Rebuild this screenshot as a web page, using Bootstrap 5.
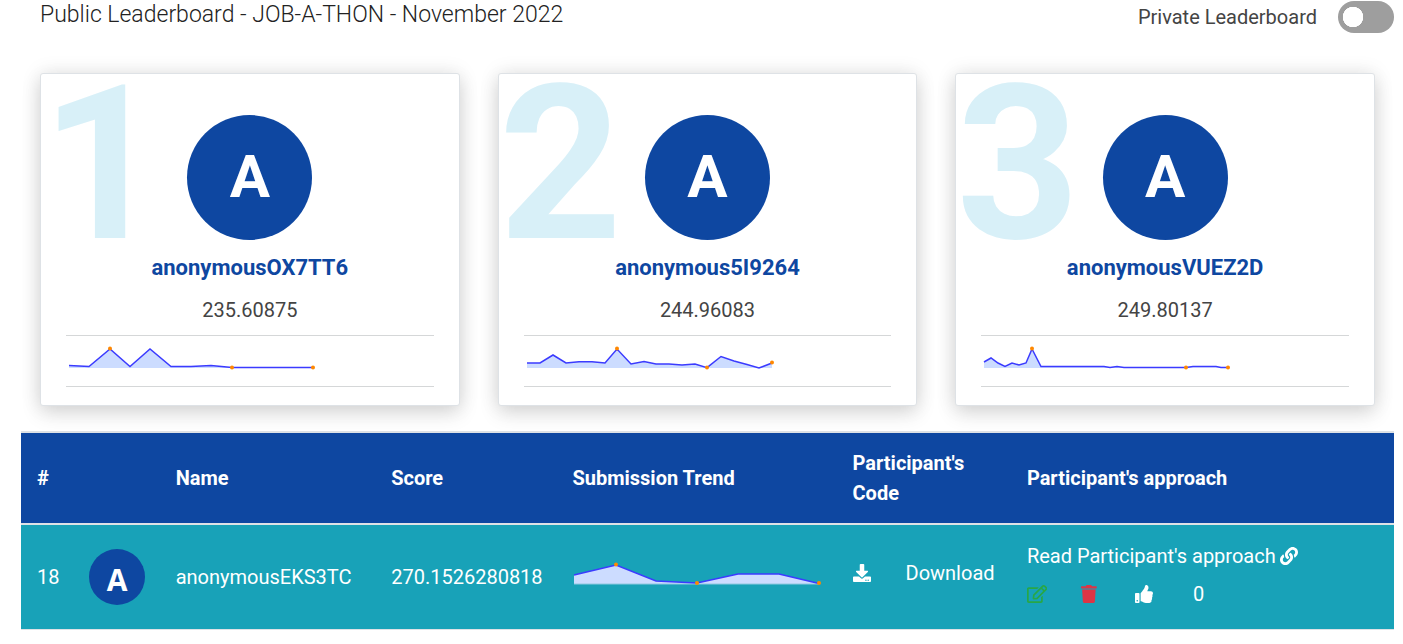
<!DOCTYPE html>
<html lang="en">
<head>
<meta charset="utf-8">
<meta name="viewport" content="width=device-width, initial-scale=1">
<title>Public Leaderboard</title>
<link href="https://cdn.jsdelivr.net/npm/bootstrap@5.3.0/dist/css/bootstrap.min.css" rel="stylesheet">
<style>
  body { font-family: Roboto, "Liberation Sans", sans-serif; font-size: 20px; line-height: 30px; color: #444; }
  .page { padding: 1px 9px 0 21px; }
  .page-head { padding-left: 19px; min-height: 72px; }
  .page-title { font-size: 23px; line-height: 28px; font-weight: 300; color: #222; }
  .switch-label { margin-right: 21px; }
  .form-check-input.private-switch {
    width: 56px; height: 32px; margin: 0; border: 0; border-radius: 16px; background-color: #9e9e9e;
    background-image: radial-gradient(circle at center, #fff 10px, transparent 10.5px);
    background-size: 30px 32px; background-position: left center; background-repeat: no-repeat;
  }
  .form-check-input.private-switch:checked { background-color: #0e47a1; background-position: right center; }
  .podium { --bs-gutter-x: 38px; margin-bottom: 25px; }
  .rank-card { border-radius: 3px; border-color: #dee2e6; padding: 41px 25px 18px; box-shadow: 0 0 20px rgba(0,0,0,.1), 0 8px 20px rgba(0,0,0,.12); }
  .rank-number { position: absolute; left: 0; top: 0; font-size: 215px; line-height: 182px; font-weight: 700; color: #d8f0f8; }
  .avatar { width: 56px; height: 56px; padding-top: 6px; border-radius: 50%; background: #0e47a1; color: #fff; font: 700 30px/1 "Open Sans", sans-serif; }
  .avatar-lg { width: 125px; height: 125px; padding: 0 0 2px; font: 700 60px/1 Roboto, sans-serif; position: relative; }
  .rank-name { font-size: 22px; line-height: 30px; font-weight: 700; color: #0e47a1; margin: 13px 0 12px; text-decoration: none; }
  .rank-score { line-height: 30px; margin-bottom: 10px; }
  .rank-trend { border-top: 1px solid #d5d7d8; border-bottom: 1px solid #d5d7d8; height: 52px; padding-top: 7px; }
  .spark { display: block; width: 252px; height: 30px; }
  .spark polygon { fill: #ccdcff; }
  .spark polyline { fill: none; stroke: #3b3bff; stroke-width: 1.5; }
  .spark circle { fill: #f80; }
  .table.board { table-layout: fixed; min-width: 1100px; margin: 0; border-top: 2px solid #dee2e6; border-bottom: 1px solid #dee2e6; }
  .table.board th, .table.board td { padding: 15px 16px; color: #fff; vertical-align: middle; border: 0; }
  .table.board th { background: #0e47a1; font-weight: 700; }
  .table.board td { background: #18a2b8; height: 105px; border-top: 2px solid #dee2e6; }
  .c-rank { width: 3.8%; } .c-pic { width: 6.3%; } .c-name { width: 15.7%; } .c-score { width: 13.2%; }
  .c-trend { width: 20.4%; } .c-code { width: 12.7%; }
  .board a, .board button { color: #fff; text-decoration: none; }
  .glyph { display: block; height: 18px; fill: currentColor; }
  .icon-btn { width: 54px; border: 0; padding: 0; background: none; }
  .download { gap: 35px; }
</style>
</head>
<body>
<div class="page">
  <header class="page-head d-flex justify-content-between align-items-start">
    <h1 class="page-title mb-0">Public Leaderboard - JOB-A-THON - November 2022</h1>
    <div class="d-flex align-items-center">
      <label for="private" class="switch-label">Private Leaderboard</label>
      <input class="form-check-input private-switch" type="checkbox" role="switch" id="private">
    </div>
  </header>

  <main>
    <div class="row podium mx-0">
      <div class="col-4">
        <div class="card rank-card">
          <span class="rank-number">1</span>
          <div class="avatar avatar-lg d-flex align-items-center justify-content-center mx-auto">A</div>
          <a href="#" class="rank-name d-block text-center">anonymousOX7TT6</a>
          <p class="rank-score text-center">235.60875</p>
          <div class="rank-trend">
            <svg class="spark" viewBox="0 0 252 30"><polygon points="3,25 3,22 23,23.5 44,6 64,23.5 84,6 105,23.5 125,23.5 145,22.5 166,24.5 247,24.5 247,25"/><polyline points="3,22.5 23,23.5 44,6 64,23.5 84,6 105,23.5 125,23.5 145,22.5 166,24.5 247,24.5"/><circle cx="44" cy="5.5" r="2"/><circle cx="166" cy="24.5" r="2"/><circle cx="247" cy="24.5" r="2"/></svg>
          </div>
        </div>
      </div>
      <div class="col-4">
        <div class="card rank-card">
          <span class="rank-number">2</span>
          <div class="avatar avatar-lg d-flex align-items-center justify-content-center mx-auto">A</div>
          <a href="#" class="rank-name d-block text-center">anonymous5I9264</a>
          <p class="rank-score text-center">244.96083</p>
          <div class="rank-trend">
            <svg class="spark" viewBox="0 0 252 30"><polygon points="3,25 3,20 16,20 29,12 42,20 55,18.7 68,18.7 81,20 93,6 107,21 120,18.5 132,21 145,21 158,22 171,21 183,24.7 197,13.5 210,18 223,21.5 235,25 248,20 248,25"/><polyline points="3,20 16,20 29,12 42,20 55,18.7 68,18.7 81,20 93,6 107,21 120,18.5 132,21 145,21 158,22 171,21 183,24.7 197,13.5 210,18 223,21.5 235,25 248,20"/><circle cx="93" cy="5.5" r="2"/><circle cx="183" cy="24.5" r="2"/><circle cx="248" cy="19.5" r="2"/></svg>
          </div>
        </div>
      </div>
      <div class="col-4">
        <div class="card rank-card">
          <span class="rank-number">3</span>
          <div class="avatar avatar-lg d-flex align-items-center justify-content-center mx-auto">A</div>
          <a href="#" class="rank-name d-block text-center">anonymousVUEZ2D</a>
          <p class="rank-score text-center">249.80137</p>
          <div class="rank-trend">
            <svg class="spark" viewBox="0 0 252 30"><polygon points="3,25 3,19 10,15 17,20 24,23.5 31,20 38,22 45,20 51,6 60,23.5 123,23.5 129,24.5 136,23.5 143,24.5 247,24.5 247,25"/><polyline points="3,19 10,15 17,20 24,23.5 31,20 38,22 45,20 51,6 60,23.5 123,23.5 129,24.5 136,23.5 143,24.5 205,24.5 212,23.5 235,23.5 240,24.5 247,24.5"/><circle cx="51" cy="5.5" r="2"/><circle cx="205" cy="24.5" r="2"/><circle cx="247" cy="24.5" r="2"/></svg>
          </div>
        </div>
      </div>
    </div>

    <table class="table board">
      <colgroup><col class="c-rank"><col class="c-pic"><col class="c-name"><col class="c-score"><col class="c-trend"><col class="c-code"><col></colgroup>
      <thead>
        <tr><th scope="col">#</th><th></th><th scope="col">Name</th><th scope="col">Score</th><th scope="col">Submission Trend</th><th scope="col">Participant's Code</th><th scope="col">Participant's approach</th></tr>
      </thead>
      <tbody>
        <tr>
          <td>18</td>
          <td><div class="avatar d-flex align-items-center justify-content-center">A</div></td>
          <td>anonymousEKS3TC</td>
          <td>270.1526280818</td>
          <td><svg class="spark mb-2" viewBox="0 0 252 30"><polygon points="2,26 2,17 44,7 84,23 125,25 166,16 207,16 247,25.5 247,26"/><path d="M2 26H247" stroke="#8fc8e0" fill="none"/><polyline points="2,17 44,7 84,23 125,25 166,16 207,16 247,25.5"/><circle cx="44" cy="6.5" r="2"/><circle cx="125" cy="25" r="2"/><circle cx="247" cy="25" r="2"/></svg></td>
          <td>
            <a href="#" class="download d-flex align-items-center mb-2">
              <svg class="glyph" viewBox="0 0 512 512"><path d="M216 0h80c13.3 0 24 10.7 24 24v168h87.7c17.8 0 26.7 21.5 14.1 34.1L269.7 378.3c-7.5 7.5-19.8 7.5-27.3 0L90.1 226.1c-12.6-12.6-3.7-34.1 14.1-34.1H192V24c0-13.3 10.7-24 24-24zm296 376v112c0 13.3-10.7 24-24 24H24c-13.3 0-24-10.7-24-24V376c0-13.3 10.7-24 24-24h146.7l49 49c20.1 20.1 52.5 20.1 72.6 0l49-49H488c13.3 0 24 10.7 24 24zm-124 88c0-11-9-20-20-20s-20 9-20 20 9 20 20 20 20-9 20-20zm64 0c0-11-9-20-20-20s-20 9-20 20 9 20 20 20 20-9 20-20z"/></svg>
              <span>Download</span>
            </a>
          </td>
          <td>
            <a href="#" class="d-flex align-items-center gap-1">Read Participant's approach
              <svg class="glyph" viewBox="0 0 512 512"><path d="M326.612 185.391c59.747 59.809 58.927 155.698.36 214.59-.11.12-.24.25-.36.37l-67.2 67.2c-59.27 59.27-155.699 59.262-214.96 0-59.27-59.26-59.27-155.7 0-214.96l37.106-37.106c9.84-9.84 26.786-3.3 27.294 10.606.648 17.722 3.826 35.527 9.69 52.721 1.986 5.822.567 12.262-3.783 16.612l-13.087 13.087c-28.026 28.026-28.905 73.66-1.155 101.96 28.024 28.579 74.086 28.749 102.325.51l67.2-67.19c28.191-28.191 28.073-73.757 0-101.83-3.701-3.694-7.429-6.564-10.341-8.569a16.037 16.037 0 0 1-6.947-12.606c-.396-10.567 3.348-21.456 11.698-29.806l21.054-21.055c5.521-5.521 14.182-6.199 20.584-1.731a152.482 152.482 0 0 1 20.522 17.197zM467.547 44.449c-59.261-59.262-155.69-59.27-214.96 0l-67.2 67.2c-.12.12-.25.25-.36.37-58.566 58.892-59.387 154.781.36 214.59a152.454 152.454 0 0 0 20.521 17.196c6.402 4.468 15.064 3.789 20.584-1.731l21.054-21.055c8.35-8.35 12.094-19.239 11.698-29.806a16.037 16.037 0 0 0-6.947-12.606c-2.912-2.005-6.64-4.875-10.341-8.569-28.073-28.073-28.191-73.639 0-101.83l67.2-67.19c28.239-28.239 74.3-28.069 102.325.51 27.75 28.3 26.872 73.934-1.155 101.96l-13.087 13.087c-4.35 4.35-5.769 10.79-3.783 16.612 5.864 17.194 9.042 34.999 9.69 52.721.509 13.906 17.454 20.446 27.294 10.606l37.106-37.106c59.271-59.259 59.271-155.699.001-214.959z"/></svg>
            </a>
            <div class="d-flex align-items-center mt-2 mb-1">
              <button type="button" class="icon-btn" aria-label="Edit"><svg class="glyph" style="color:#28a745" viewBox="0 0 576 512"><path d="M402.3 344.9l32-32c5-5 13.7-1.5 13.7 5.7V464c0 26.5-21.5 48-48 48H48c-26.5 0-48-21.5-48-48V112c0-26.5 21.5-48 48-48h273.5c7.1 0 10.7 8.6 5.7 13.7l-32 32c-1.5 1.5-3.5 2.3-5.7 2.3H48v352h352V350.5c0-2.1.8-4.1 2.3-5.6zm156.6-201.8L296.3 405.7l-90.4 10c-26.2 2.9-48.5-19.2-45.6-45.6l10-90.4L432.9 17.1c22.9-22.9 59.9-22.9 82.7 0l43.2 43.2c22.9 22.9 22.9 60 .1 82.8zM460.1 174L402 115.9 216.2 301.8l-7.3 65.3 65.3-7.3L460.1 174zm64.8-79.7l-43.2-43.2c-4.1-4.1-10.8-4.1-14.8 0L436 82l58.1 58.1 30.9-30.9c4-4.2 4-10.8-.1-14.9z"/></svg></button>
              <button type="button" class="icon-btn" aria-label="Delete"><svg class="glyph text-danger" viewBox="0 0 448 512"><path d="M432 32H312l-9.4-18.7A24 24 0 0 0 281.1 0H166.8a23.72 23.72 0 0 0-21.4 13.3L136 32H16A16 16 0 0 0 0 48v32a16 16 0 0 0 16 16h416a16 16 0 0 0 16-16V48a16 16 0 0 0-16-16zM53.2 467a48 48 0 0 0 47.9 45h245.8a48 48 0 0 0 47.9-45L416 128H32z"/></svg></button>
              <button type="button" class="icon-btn me-1" aria-label="Like"><svg class="glyph" viewBox="0 0 512 512"><path d="M104 224H24c-13.255 0-24 10.745-24 24v240c0 13.255 10.745 24 24 24h80c13.255 0 24-10.745 24-24V248c0-13.255-10.745-24-24-24zM64 472c-13.255 0-24-10.745-24-24s10.745-24 24-24 24 10.745 24 24-10.745 24-24 24zM384 81.452c0 42.416-25.97 66.208-33.277 94.548h101.723c33.397 0 59.397 27.746 59.553 58.098.084 17.938-7.546 37.249-19.439 49.197l-.11.11c9.836 23.337 8.237 56.037-9.308 79.469 8.681 25.895-.069 57.704-16.382 74.757 4.298 17.598 2.244 32.575-6.148 44.632C440.202 511.587 389.616 512 346.839 512l-2.845-.001c-48.287-.017-87.806-17.598-119.56-31.725-15.957-7.099-36.821-15.887-52.651-16.178-6.54-.12-11.783-5.457-11.783-11.998v-213.77c0-3.2 1.282-6.271 3.558-8.521 39.614-39.144 56.648-80.587 89.117-113.111 14.804-14.832 20.188-37.236 25.393-58.902C282.515 39.293 291.817 0 312 0c24 0 72 8 72 81.452z"/></svg></button>
              <span>0</span>
            </div>
          </td>
        </tr>
      </tbody>
    </table>
  </main>
</div>
<script src="https://cdn.jsdelivr.net/npm/bootstrap@5.3.0/dist/js/bootstrap.bundle.min.js"></script>
</body>
</html>
